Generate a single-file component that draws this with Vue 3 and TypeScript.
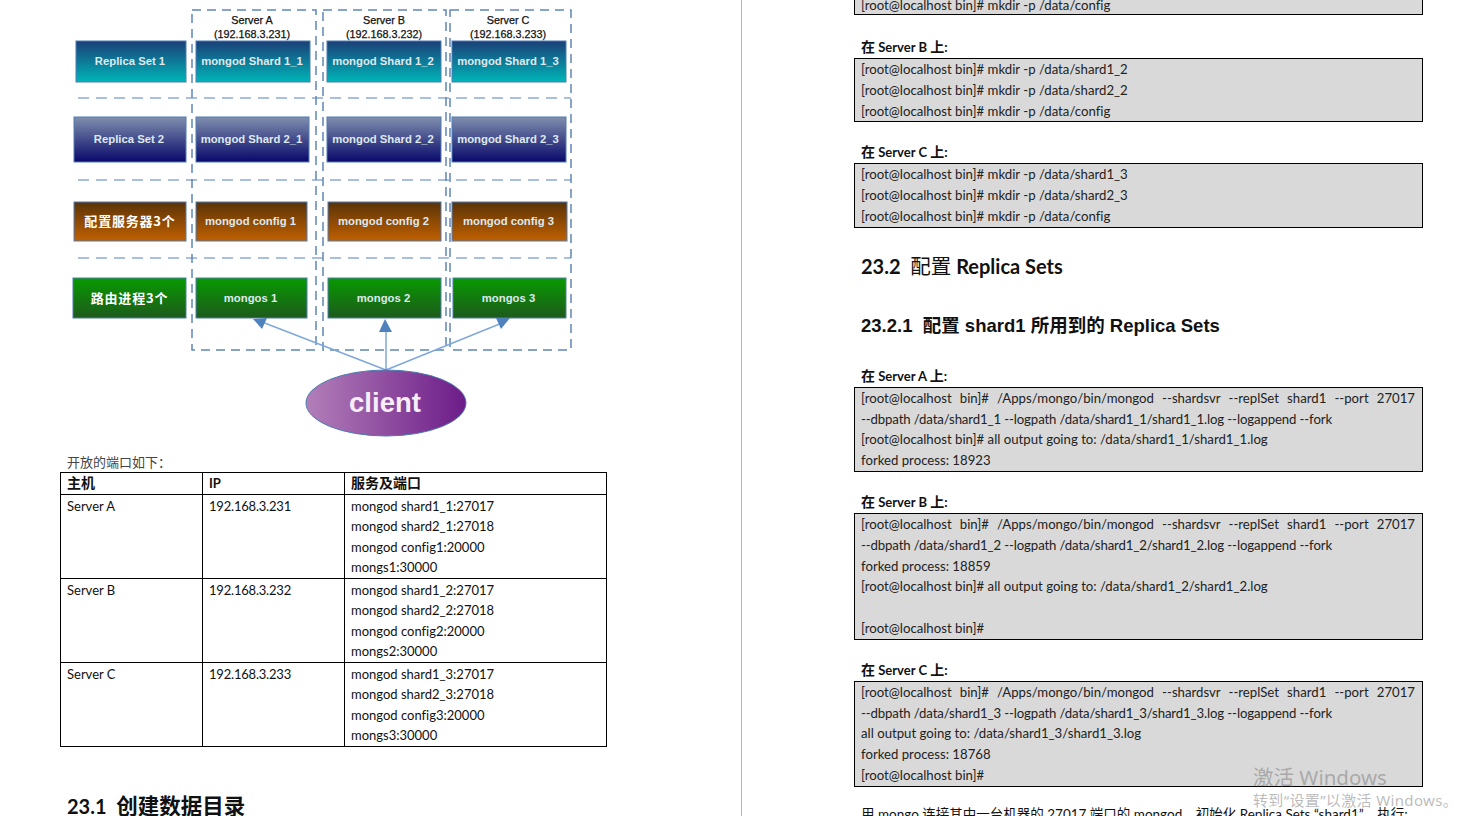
<script setup lang="ts">
interface Box { x: number, w: number, label: string, cjk?: boolean }
interface Row { y: number, h: number, grad: string, boxes: Box[] }

const rows: Row[] = [
  { y: 41, h: 41, grad: "teal", boxes: [
    { x: 76, w: 110, label: "Replica Set 1" },
    { x: 196, w: 114, label: "mongod Shard 1_1" },
    { x: 327, w: 114, label: "mongod Shard 1_2" },
    { x: 452, w: 114, label: "mongod Shard 1_3" },
  ] },
  { y: 117, h: 45, grad: "navy", boxes: [
    { x: 74, w: 112, label: "Replica Set 2" },
    { x: 196, w: 113, label: "mongod Shard 2_1" },
    { x: 327, w: 114, label: "mongod Shard 2_2" },
    { x: 452, w: 114, label: "mongod Shard 2_3" },
  ] },
  { y: 202, h: 39, grad: "brown", boxes: [
    { x: 74, w: 112, label: "配置服务器3个", cjk: true },
    { x: 196, w: 111, label: "mongod config 1" },
    { x: 328, w: 113, label: "mongod config 2" },
    { x: 452, w: 115, label: "mongod config 3" },
  ] },
  { y: 278, h: 40, grad: "green", boxes: [
    { x: 73, w: 113, label: "路由进程3个", cjk: true },
    { x: 196, w: 111, label: "mongos 1" },
    { x: 328, w: 113, label: "mongos 2" },
    { x: 453, w: 113, label: "mongos 3" },
  ] },
];

const gradients = [
  { id: "teal", from: "#1b3f78", to: "#00b5b8" },
  { id: "navy", from: "#7f8fae", to: "#08086a" },
  { id: "brown", from: "#5a3308", to: "#c06000" },
  { id: "green", from: "#089a00", to: "#1d5a1d" },
];

const servers = [
  { x: 192, w: 124, cx: 252, name: "Server A", ip: "(192.168.3.231)" },
  { x: 323, w: 123, cx: 384, name: "Server B", ip: "(192.168.3.232)" },
  { x: 450, w: 121, cx: 508, name: "Server C", ip: "(192.168.3.233)" },
];

const ports = [
  { host: "Server A", ip: "192.168.3.231", items: ["mongod shard1_1:27017", "mongod shard2_1:27018", "mongod config1:20000", "mongs1:30000"] },
  { host: "Server B", ip: "192.168.3.232", items: ["mongod shard1_2:27017", "mongod shard2_2:27018", "mongod config2:20000", "mongs2:30000"] },
  { host: "Server C", ip: "192.168.3.233", items: ["mongod shard1_3:27017", "mongod shard2_3:27018", "mongod config3:20000", "mongs3:30000"] },
];

const mkdirB = ["[root@localhost bin]# mkdir -p /data/shard1_2", "[root@localhost bin]# mkdir -p /data/shard2_2", "[root@localhost bin]# mkdir -p /data/config"];
const mkdirC = ["[root@localhost bin]# mkdir -p /data/shard1_3", "[root@localhost bin]# mkdir -p /data/shard2_3", "[root@localhost bin]# mkdir -p /data/config"];

const startCmd = "[root@localhost bin]# /Apps/mongo/bin/mongod --shardsvr --replSet shard1 --port 27017";
const replA = [
  startCmd,
  "--dbpath /data/shard1_1 --logpath /data/shard1_1/shard1_1.log --logappend --fork",
  "[root@localhost bin]# all output going to: /data/shard1_1/shard1_1.log",
  "forked process: 18923",
];
const replB = [
  startCmd,
  "--dbpath /data/shard1_2 --logpath /data/shard1_2/shard1_2.log --logappend --fork",
  "forked process: 18859",
  "[root@localhost bin]# all output going to: /data/shard1_2/shard1_2.log",
  "\u00a0",
  "[root@localhost bin]#",
];
const replC = [
  startCmd,
  "--dbpath /data/shard1_3 --logpath /data/shard1_3/shard1_3.log --logappend --fork",
  "all output going to: /data/shard1_3/shard1_3.log",
  "forked process: 18768",
  "[root@localhost bin]#",
];
</script>

<template>
  <div class="desk">
    <section class="page left">
      <svg class="diagram" width="741" height="452" viewBox="0 0 741 452">
        <defs>
          <linearGradient v-for="g in gradients" :id="g.id" :key="g.id" x1="0" y1="0" x2="0" y2="1">
            <stop offset="0" :stop-color="g.from" />
            <stop offset="1" :stop-color="g.to" />
          </linearGradient>
          <linearGradient id="violet" x1="0" y1="0" x2="1" y2="0">
            <stop offset="0" stop-color="#b27fb8" />
            <stop offset="1" stop-color="#6c1c88" />
          </linearGradient>
        </defs>

        <line v-for="y in [98, 180, 258]" :key="y" x1="78" :y1="y" x2="571" :y2="y" class="row-dash" />
        <rect v-for="s in servers" :key="s.x" :x="s.x" y="10" :width="s.w" height="340" class="col-dash" />

        <g v-for="s in servers" :key="s.name">
          <text :x="s.cx" y="24" class="server">{{ s.name }}</text>
          <text :x="s.cx" y="38" class="server">{{ s.ip }}</text>
        </g>

        <g v-for="r in rows" :key="r.y">
          <g v-for="b in r.boxes" :key="b.x">
            <rect :x="b.x" :y="r.y" :width="b.w" :height="r.h" :fill="`url(#${r.grad})`" class="box" />
            <text v-if="b.cjk" :x="b.x + b.w / 2" :y="r.y + r.h / 2 + 4.5" class="box-cjk">{{ b.label }}</text>
            <text v-else :x="b.x + b.w / 2 - 1" :y="r.y + r.h / 2 + 3.5" class="box-label">{{ b.label }}</text>
          </g>
        </g>

        <path d="M386 370 262 322M386 370V328M386 370 502 323" class="arrow-line" />
        <polygon points="253,319 267,318 262,329" class="arrow-head" />
        <polygon points="385,319 379,332 392,332" class="arrow-head" />
        <polygon points="510,318 496,318 501,329" class="arrow-head" />

        <ellipse cx="386" cy="403" rx="80" ry="33" fill="url(#violet)" stroke="#4a7bb0" />
        <text x="385" y="412" class="client">client</text>
      </svg>

      <p class="caption">开放的端口如下：</p>
      <table class="ports">
        <thead>
          <tr><th><span class="cn">主机</span></th><th>IP</th><th><span class="cn">服务及端口</span></th></tr>
        </thead>
        <tbody>
          <tr v-for="p in ports" :key="p.host">
            <td>{{ p.host }}</td>
            <td class="ip">{{ p.ip }}</td>
            <td><div v-for="i in p.items" :key="i">{{ i }}</div></td>
          </tr>
        </tbody>
      </table>

      <h2 class="h-23-1">23.1&nbsp;&nbsp;<span class="cn-big">创建数据目录</span></h2>
    </section>

    <section class="page right">
      <div class="code first"><div>[root@localhost bin]# mkdir -p /data/config</div></div>

      <h4 class="after-first"><span class="cn">在</span> Server B <span class="cn">上</span>:</h4>
      <div class="code"><div v-for="(l, i) in mkdirB" :key="i">{{ l }}</div></div>

      <h4><span class="cn">在</span> Server C <span class="cn">上</span>:</h4>
      <div class="code"><div v-for="(l, i) in mkdirC" :key="i">{{ l }}</div></div>

      <h2 class="h-23-2">23.2&nbsp;&nbsp;<span class="cn-light">配置</span> Replica Sets</h2>
      <h3>23.2.1&nbsp;&nbsp;配置 shard1 所用到的 Replica Sets</h3>

      <h4 class="after-h3"><span class="cn">在</span> Server A <span class="cn">上</span>:</h4>
      <div class="code"><div v-for="(l, i) in replA" :key="i" :class="{ spread: i === 0, tight: i === 1 }">{{ l }}</div></div>

      <h4><span class="cn">在</span> Server B <span class="cn">上</span>:</h4>
      <div class="code"><div v-for="(l, i) in replB" :key="i" :class="{ spread: i === 0, tight: i === 1 }">{{ l }}</div></div>

      <h4><span class="cn">在</span> Server C <span class="cn">上</span>:</h4>
      <div class="code"><div v-for="(l, i) in replC" :key="i" :class="{ spread: i === 0, tight: i === 1 }">{{ l }}</div></div>

      <p class="tail">用 mongo 连接其中一台机器的 27017 端口的 mongod，初始化 Replica Sets “shard1”，执行:</p>
    </section>

    <div class="watermark">
      <div class="wm-big">激活 Windows</div>
      <div class="wm-small">转到“设置”以激活 Windows。</div>
    </div>
  </div>
</template>

<style scoped>
.desk {
  position: relative;
  display: flex;
  width: 1470px;
  height: 816px;
  overflow: hidden;
  background: #fff;
  color: #111;
  font-family: Lato, "Noto Sans CJK SC", sans-serif;
  font-size: 13px;
  font-variant-ligatures: none;
}
.page {
  box-sizing: border-box;
  height: 816px;
  overflow: hidden;
}
.left {
  width: 742px;
  border-right: 1px solid #b5b5b5;
}
.right {
  flex: 1;
  padding: 0 47px 0 112px;
}
.diagram {
  display: block;
}
.row-dash {
  stroke: #8eabd2;
  stroke-width: 1.5;
  stroke-dasharray: 11 7;
}
.col-dash {
  fill: none;
  stroke: #5f86b8;
  stroke-width: 1.5;
  stroke-dasharray: 9 6;
}
.box {
  stroke: #4f7cb5;
  stroke-width: 1;
}
.server {
  font-family: "Liberation Sans", sans-serif;
  font-size: 10.8px;
  text-anchor: middle;
  fill: #111;
  stroke: #111;
  stroke-width: 0.25;
}
.box-label {
  font-family: "Liberation Sans", sans-serif;
  font-size: 11.3px;
  font-weight: bold;
  text-anchor: middle;
  fill: #dfe9ee;
}
.box-cjk {
  font-family: "Noto Sans CJK SC", sans-serif;
  font-size: 13px;
  font-weight: bold;
  letter-spacing: 0.8px;
  text-anchor: middle;
  fill: #fff;
}
.arrow-line {
  fill: none;
  stroke: #7fa8d8;
  stroke-width: 1.5;
}
.arrow-head {
  fill: #4f81bd;
}
.client {
  font-family: "Liberation Sans", sans-serif;
  font-size: 27.5px;
  font-weight: bold;
  text-anchor: middle;
  fill: #f7eef8;
}
.caption {
  margin: 0 0 0 67px;
  height: 20px;
  line-height: 20px;
  font-size: 13px;
  color: #444;
  text-spacing-trim: space-all;
}
.cn {
  font-size: 14px;
}
.cn-big {
  font-size: 21.5px;
}
.cn-light {
  font-size: 20.5px;
  font-weight: 400;
}
.ports {
  margin-left: 60px;
  width: 547px;
  table-layout: fixed;
  border-collapse: collapse;
  line-height: 20.6px;
}
.ports th,
.ports td {
  border: 1px solid #000;
  padding: 0 6px;
  text-align: left;
  vertical-align: top;
}
.ports td {
  padding-top: 0.6px;
}
.ports td.ip {
  letter-spacing: -0.2px;
}
.ports th {
  height: 21px;
  font-weight: bold;
}
.ports th:nth-child(1),
.ports th:nth-child(2) {
  width: 129px;
}
.h-23-1 {
  margin: 46px 0 0 67px;
  font-size: 20px;
  line-height: 26px;
  font-weight: bold;
}
.code {
  box-sizing: border-box;
  border: 1px solid #000;
  background: #d9d9d9;
  padding: 0 7px 0 6px;
  font-size: 13.2px;
  line-height: 20.8px;
  color: #222;
}
.code.first {
  margin-top: -6px;
  height: 21px;
}
.spread {
  text-align: justify;
  text-align-last: justify;
}
.tight {
  letter-spacing: -0.12px;
}
h4 {
  margin: 20px 0 1px 7px;
  height: 20px;
  line-height: 20px;
  font-size: 13px;
  font-weight: bold;
}
h4.after-first {
  margin-top: 22px;
}
h4.after-h3 {
  margin-top: 27px;
}
.h-23-2 {
  margin: 25px 0 0 7px;
  font-size: 20px;
  line-height: 26px;
  font-weight: bold;
}
h3 {
  margin: 34px 0 0 7px;
  font-family: "Liberation Sans", "Noto Sans CJK SC", sans-serif;
  font-size: 18.5px;
  line-height: 26px;
  font-weight: bold;
}
.tail {
  margin: 17px 0 0 7px;
  font-size: 13.5px;
  line-height: 20px;
  white-space: nowrap;
}
.watermark {
  position: absolute;
  left: 1253px;
  top: 764px;
  color: rgba(120, 120, 120, 0.5);
  font-family: "Noto Sans", "Noto Sans CJK SC", sans-serif;
}
.wm-big {
  font-size: 20.5px;
  line-height: 26px;
}
.wm-small {
  font-size: 15px;
  line-height: 21px;
  letter-spacing: 0.35px;
  white-space: nowrap;
}
</style>
